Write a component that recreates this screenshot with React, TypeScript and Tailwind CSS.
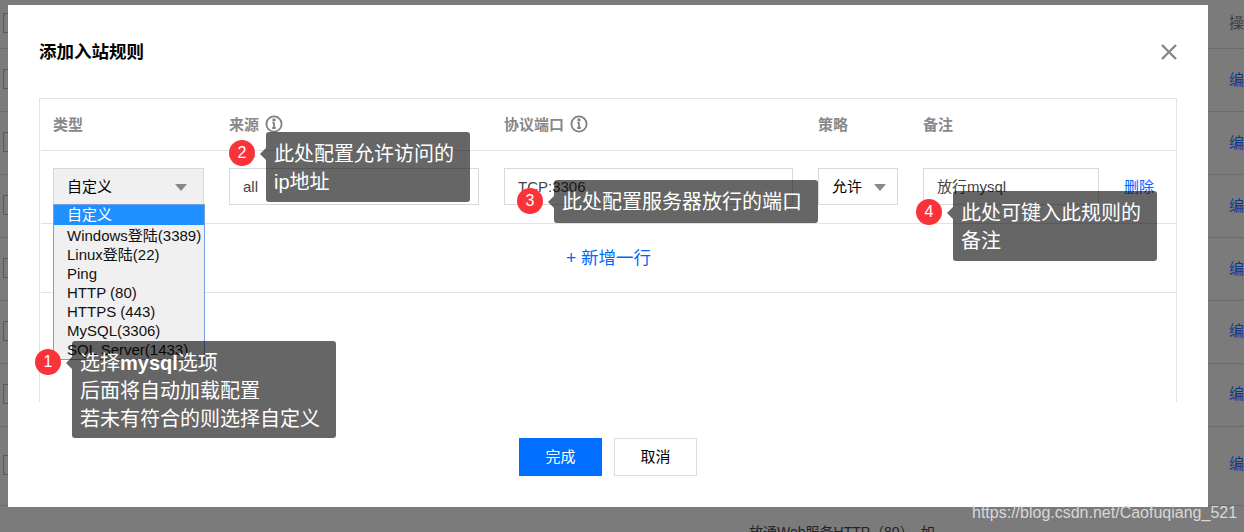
const font = { fontFamily: '"Liberation Sans", "Noto Sans CJK SC", sans-serif' };

const rowLines = [48, 111, 174, 237, 300, 363, 426, 505];
const checkboxes = [13, 69, 132, 195, 258, 321, 384, 455];
const rightLinks = [72, 135, 198, 261, 323, 386, 456];
const options = ['Windows登陆(3389)', 'Linux登陆(22)', 'Ping', 'HTTP (80)', 'HTTPS (443)', 'MySQL(3306)', 'SQL Server(1433)'];

function InfoIcon() {
  return (
    <svg className="-mt-[2px]" width="18" height="18" viewBox="0 0 18 18" fill="none" stroke="#808080" strokeWidth="1.8">
      <circle cx="9" cy="9" r="7.6" />
      <path d="M9 7.6v5.4M7.2 13h3.6M7.4 7.8H9" />
      <circle cx="9" cy="4.9" r="0.8" fill="#808080" />
    </svg>
  );
}

function Arrow({ color = '#888888' }: { color?: string }) {
  return <span className="inline-block h-0 w-0 border-x-[6px] border-t-[7px] border-x-transparent" style={{ borderTopColor: color }} />;
}

function Tip({ n, left, top, width, height, children }: { n: number; left: number; top: number; width: number; height: number; children: React.ReactNode }) {
  return (
    <div className="absolute" style={{ left, top, width, height }}>
      <div className="h-full w-full rounded-[3px] bg-black/60 px-2 pt-[8px] text-[20px] leading-[28px] text-white">{children}</div>
      <span className="absolute left-[-6px] top-[16px] h-0 w-0 border-y-[6px] border-r-[6px] border-y-transparent border-r-black/60" />
      <span className="absolute left-[-37px] top-[8px] flex h-[26px] w-[26px] items-center justify-center rounded-full bg-[#fa3239] text-[16px] text-white">{n}</span>
    </div>
  );
}

export default function App() {
  return (
    <div className="relative h-[532px] w-[1244px] overflow-hidden bg-[#7b7b7b] text-[15px] text-black" style={font}>
      {/* page behind the dialog */}
      {rowLines.map((y) => (
        <div key={y} className="absolute left-0 right-0 h-px bg-[#6c6c6c]" style={{ top: y }} />
      ))}
      {checkboxes.map((y) => (
        <div key={y} className="absolute left-[3px] h-[20px] w-[8px] border border-[#5a5a5a]" style={{ top: y }} />
      ))}
      <div className="absolute left-[1229px] top-[15px] whitespace-nowrap text-[15px] leading-[16px] text-[#3f3f3f]">操作</div>
      {rightLinks.map((y) => (
        <div key={y} className="absolute left-[1229px] whitespace-nowrap text-[15px] leading-[16px] text-[#0b3a8c]" style={{ top: y }}>编辑</div>
      ))}
      <div className="absolute left-[749px] top-[524px] whitespace-nowrap text-[14px] leading-[16px] text-[#222222]">放通Web服务HTTP（80），如</div>

      {/* dialog */}
      <div className="absolute left-[8px] top-[5px] flex h-[502px] w-[1200px] flex-col bg-white px-[31px]">
        <div className="flex h-[93px] shrink-0 items-start justify-between pt-[35px]">
          <h2 className="text-[17.5px] font-bold leading-[24px] text-black">添加入站规则</h2>
          <svg className="mt-[4px]" width="16" height="16" viewBox="0 0 16 16" stroke="#888888" strokeWidth="2.4">
            <path d="M1 1l14 14M15 1L1 15" />
          </svg>
        </div>

        <div className="h-[304px] shrink-0 border-x border-t border-[#e2e2e2] pl-[1px]">
          <div className="grid h-[52px] grid-cols-[176px_275px_314px_105px_1fr] items-center border-b border-[#e2e2e2] pl-[12px] pt-[1px] font-bold text-[#888888]">
            <span>类型</span>
            <span className="flex items-center gap-[6px]">来源 <InfoIcon /></span>
            <span className="flex items-center gap-[6px]">协议端口 <InfoIcon /></span>
            <span>策略</span>
            <span>备注</span>
          </div>
          <div className="grid h-[73px] grid-cols-[176px_275px_314px_105px_1fr] items-start border-b border-[#e2e2e2] pl-[12px] pt-[17px]">
            <div className="flex h-[37px] w-[151px] items-center justify-between border border-[#d9d9d9] bg-[#f0f0f0] pl-[13px] pr-[16px] pt-[2px]">
              自定义 <Arrow />
            </div>
            <div className="flex h-[37px] w-[250px] items-center border border-[#d9d9d9] pl-[13px] pt-[2px] text-[#444444]">all</div>
            <div className="flex h-[37px] w-[289px] items-center border border-[#d9d9d9] pl-[13px] pt-[2px] text-[#444444]">TCP:3306</div>
            <div className="flex h-[37px] w-[80px] items-center justify-between border border-[#d9d9d9] pl-[13px] pr-[11px] pt-[2px]">
              允许 <Arrow />
            </div>
            <div className="flex items-center">
              <div className="flex h-[37px] w-[176px] items-center border border-[#d9d9d9] pl-[13px] pt-[2px] text-[#444444]">放行mysql</div>
              <a className="ml-[25px] pt-[2px] text-[#0066ff]">删除</a>
            </div>
          </div>
          <div className="flex h-[69px] items-center justify-center border-b border-[#e2e2e2]">
            <span className="text-[17.5px] text-[#0066ff]">+ 新增一行</span>
          </div>
        </div>

        <div className="flex flex-1 justify-center gap-[12px] pt-[36px]">
          <button className="h-[38px] w-[83px] bg-[#006eff] text-white">完成</button>
          <button className="h-[38px] w-[83px] border border-[#dddddd] bg-white text-black">取消</button>
        </div>
      </div>

      {/* open select list */}
      <div className="absolute left-[53px] top-[204px] h-[156px] w-[152px] border border-[#7a9fe0] bg-[#f0f0f0] text-[15px] leading-[19px] text-[#111111]">
        <div className="h-[20px] bg-[#1e90ff] pl-[13px] text-white">自定义</div>
        <div className="pt-[1px]">
          {options.map((o) => (
            <div key={o} className="whitespace-nowrap pl-[13px]">{o}</div>
          ))}
        </div>
      </div>

      {/* annotations */}
      <Tip n={1} left={72} top={341} width={264} height={97}>
        <div>选择<b>mysql</b>选项<br />后面将自动加载配置<br />若未有符合的则选择自定义</div>
      </Tip>
      <Tip n={2} left={266} top={132} width={204} height={70}>
        <div>此处配置允许访问的<br />ip地址</div>
      </Tip>
      <Tip n={3} left={554} top={180} width={264} height={43}>
        <div>此处配置服务器放行的端口</div>
      </Tip>
      <Tip n={4} left={953} top={191} width={204} height={70}>
        <div>此处可键入此规则的<br />备注</div>
      </Tip>

      <div className="absolute left-[972px] top-[503px] whitespace-nowrap text-[16px] leading-[20px] text-[#d8d8d8]">https://blog.csdn.net/Caofuqiang_521</div>
    </div>
  );
}
